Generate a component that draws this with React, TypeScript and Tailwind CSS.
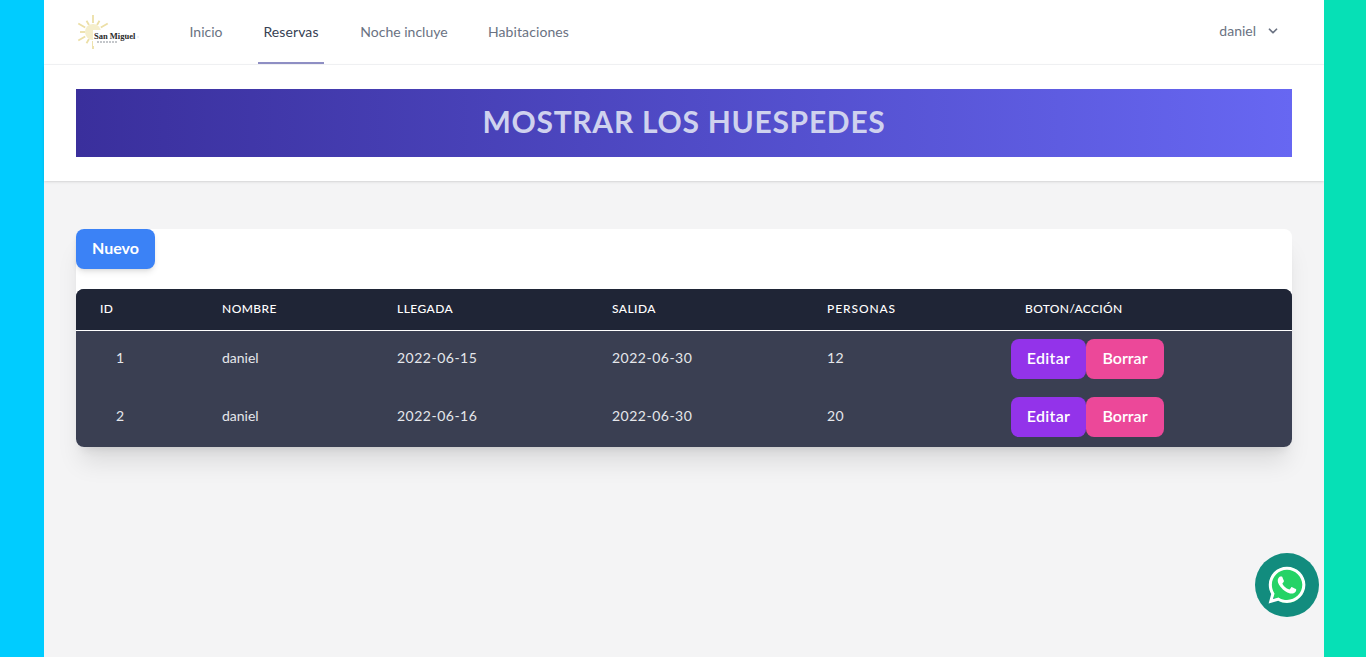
import { ChevronDown } from "lucide-react"
import { FaWhatsapp } from "react-icons/fa"

const rows = [
    { id: 1, nombre: "daniel", llegada: "2022-06-15", salida: "2022-06-30", personas: 12 },
    { id: 2, nombre: "daniel", llegada: "2022-06-16", salida: "2022-06-30", personas: 20 },
]

function Logo() {
    const rays = [0, 30, 60, 90, 120, 150, 180, 210, 240, 270, 300, 330]
    return (
        <div className="relative w-[64px] h-[38px]">
            <svg viewBox="0 0 64 38" className="absolute left-0 top-0 w-[64px] h-[38px]">
                {rays.map((r, i) => (
                    <line key={r} x1="17" y1={i % 2 ? 11 : 10} x2="17" y2={i % 2 ? 6 : 2} stroke="#ecdfa6" strokeWidth="1.8" transform={`rotate(${r} 17 19)`} />
                ))}
                <circle cx="17" cy="19" r="8" fill="#f5eecb" />
                <rect x="17" y="17" width="30" height="16" fill="#ffffff" />
                <line x1="21" y1="29" x2="42" y2="29" stroke="#8a8f98" strokeWidth="1.2" strokeDasharray="2 1" />
                <circle cx="50" cy="22" r="1" fill="#c3cfe2" />
                <circle cx="57" cy="25" r="1" fill="#d0daea" />
                <circle cx="62" cy="24" r="0.7" fill="#d0daea" />
            </svg>
            <span className="absolute left-[18px] top-[18px] text-[8.5px] leading-[10px] font-bold text-[#2a2a2a] whitespace-nowrap font-['Liberation_Serif',serif]">San Miguel</span>
        </div>
    )
}

export default function App() {
    return (
        <div className="flex min-h-[657px] font-['Lato','Open_Sans',sans-serif]">
            <div className="w-[44px] bg-[#00ccff]" />
            <div className="flex-1 flex flex-col bg-[#f4f4f5]">
                <nav className="h-[65px] bg-white border-b border-gray-100 px-8 flex items-center justify-between">
                    <div className="flex h-full items-center">
                        <Logo />
                        <div className="flex h-full ml-[46px] gap-8 text-sm">
                            <a className="w-[40px] flex items-center justify-center text-gray-500">Inicio</a>
                            <a className="w-[66px] pt-[2px] flex items-center justify-center text-gray-700 border-b-2 border-[#8f8fc4] tracking-[0.1px]">Reservas</a>
                            <a className="w-[96px] flex items-center justify-center text-gray-500">Noche incluye</a>
                            <a className="w-[89px] flex items-center justify-center text-gray-500 tracking-[0.1px]">Habitaciones</a>
                        </div>
                    </div>
                    <div className="flex items-center gap-[10px] pr-3 pb-[2px] text-sm text-gray-500">
                        <span>daniel</span>
                        <ChevronDown className="w-[14px] h-[14px]" strokeWidth={3} />
                    </div>
                </nav>
                <header className="bg-white shadow py-6 px-8">
                    <div className="h-[68px] pb-[4px] bg-gradient-to-r from-[#3a2f9c] to-[#6767f2] flex items-center justify-center">
                        <h1 className="text-[30px] font-bold text-[#cfd2ee] tracking-[0.72px]">MOSTRAR LOS HUESPEDES</h1>
                    </div>
                </header>
                <main className="py-12 px-8">
                    <div className="bg-white rounded-lg shadow-xl">
                        <button className="block h-10 w-[79px] pb-[2px] bg-[#3b82f6] text-white font-bold rounded-lg shadow-md">Nuevo</button>
                        <div className="h-5" />
                        <div className="bg-[#3a3f52] rounded-lg overflow-hidden pb-px">
                            <table className="w-full table-fixed text-white">
                                <thead className="bg-[#1f2536] text-xs">
                                    <tr className="h-[41px] border-b border-white tracking-[0.45px]">
                                        <th className="w-[122px] pl-6 text-left font-medium">ID</th>
                                        <th className="w-[175px] pl-6 text-left font-medium">NOMBRE</th>
                                        <th className="w-[215px] pl-6 text-left font-medium">LLEGADA</th>
                                        <th className="w-[215px] pl-6 text-left font-medium">SALIDA</th>
                                        <th className="w-[198px] pl-6 text-left font-medium tracking-[0.9px]">PERSONAS</th>
                                        <th className="pl-6 text-left font-medium tracking-[0.35px]">BOTON/ACCIÓN</th>
                                    </tr>
                                </thead>
                                <tbody className="text-sm text-gray-200">
                                    {rows.map((row) => (
                                        <tr key={row.id} className="h-[58px]">
                                            <td className="pl-6 pb-[2px]"><span className="block w-10 text-center">{row.id}</span></td>
                                            <td className="pl-6 pb-[2px]">{row.nombre}</td>
                                            <td className="pl-6 pb-[2px] tracking-[0.5px]">{row.llegada}</td>
                                            <td className="pl-6 pb-[2px] tracking-[0.5px]">{row.salida}</td>
                                            <td className="pl-6 pb-[2px] tracking-[0.5px]">{row.personas}</td>
                                            <td className="pl-[10px]">
                                                <div className="flex text-white text-base font-semibold">
                                                    <button className="h-10 w-[75px] pb-[2px] rounded-lg bg-[#9333ea] tracking-[0.3px]">Editar</button>
                                                    <button className="h-10 w-[78px] pb-[2px] rounded-lg bg-[#ec4899]">Borrar</button>
                                                </div>
                                            </td>
                                        </tr>
                                    ))}
                                </tbody>
                            </table>
                        </div>
                    </div>
                </main>
            </div>
            <div className="w-[42px] bg-[#06e0b6]" />
            <div className="fixed left-[1255px] top-[553px] w-16 h-16 rounded-full bg-[#128c7e] flex items-center justify-center">
                <div className="relative w-[42px] h-[42px]">
                    <div className="absolute left-[3px] top-[3px] w-9 h-9 rounded-full bg-[#25d366]" />
                    <FaWhatsapp className="absolute inset-0 w-[42px] h-[42px] text-white" />
                </div>
            </div>
        </div>
    )
}
